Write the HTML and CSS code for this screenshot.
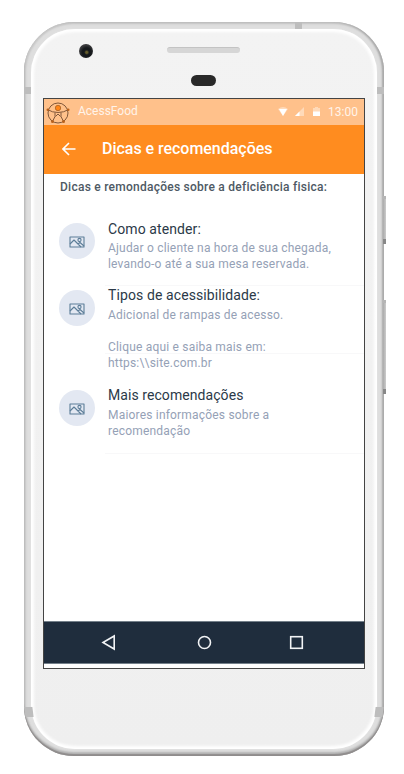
FILE: index.html
```html
<!DOCTYPE html>
<html lang="pt-BR">
<head>
<meta charset="utf-8">
<title>AcessFood</title>
<link rel="stylesheet" href="styles.css">
</head>
<body>
<svg width="0" height="0" class="defs">
  <symbol id="picture" viewBox="0 0 16 12">
    <g fill="none" stroke="#5c7d98" stroke-width="1.1" stroke-linejoin="round">
      <path d="M1 1h14v10H1z"/>
      <path d="M1 8l4-4 4 4 2-1.500 4 3.500M9 8l3 3"/>
      <circle cx="10.500" cy="4" r="1.600"/>
    </g>
  </symbol>
</svg>
<div class="phone">
  <i class="button power"></i><i class="button volume"></i>
  <i class="band top"></i><i class="band left"></i><i class="band right"></i>
  <i class="band low-left"></i><i class="band low-right"></i>
  <div class="face">
    <i class="camera"></i><i class="speaker"></i><i class="sensor"></i>
    <main class="screen">
      <div class="status">
        <svg class="logo" width="24" height="24" viewBox="0 0 24 24">
          <g fill="none" stroke="#80573a" stroke-width="1">
            <circle cx="12" cy="12" r="10"/>
            <path d="M1.500 8.500Q6 11.500 12 11.500T22.500 8.500M9 11.500v4L6.500 20.500M15 11.500v4L17.500 20.500M9.500 15.500L12 13l2.500 2.500"/>
          </g>
          <circle cx="12" cy="7" r="2.700" fill="#ff8419" stroke="#a96325" stroke-width=".8"/>
          <g fill="#b9611b"><circle cx="1.800" cy="8.700" r="1.300"/><circle cx="22.200" cy="8.700" r="1.300"/><circle cx="6.500" cy="20.500" r="1.500"/><circle cx="17.500" cy="20.500" r="1.500"/></g>
        </svg>
        <span class="app">AcessFood</span>
        <svg class="signals" width="46" height="12" viewBox="0 0 46 12">
          <path d="M0 3Q5 -1 10 3L5 10z" fill="#fff" opacity=".4"/>
          <path d="M1 3h8L5 10z" fill="#fff"/>
          <path d="M17 10l9-9v9z" fill="#fff" opacity=".4"/>
          <path d="M17 10l4.500-4.500V10z" fill="#fff"/>
          <path d="M37 1h3v1h2v4h-7V2h2z" fill="#fff" opacity=".4"/>
          <path d="M35 5.500h7V10h-7z" fill="#fff"/>
        </svg>
        <span class="clock">13:00</span>
      </div>
      <header class="bar">
        <svg width="14" height="14" viewBox="0 0 14 14"><path d="M13.500 7H1.500M7 1L1 7l6 6" fill="none" stroke="#fff" stroke-width="1.600"/></svg>
        <h1>Dicas e recomendações</h1>
      </header>
      <section class="content">
        <h2>Dicas e remondações sobre a deficiência fisica:</h2>
        <article class="item first">
          <span class="avatar"><svg width="16" height="12"><use href="#picture"/></svg></span>
          <div class="copy"><h3>Como atender:</h3><p>Ajudar o cliente na hora de sua chegada,<br>levando-o até a sua mesa reservada.</p></div>
        </article>
        <article class="item second">
          <span class="avatar"><svg width="16" height="12"><use href="#picture"/></svg></span>
          <div class="copy"><h3>Tipos de acessibilidade:</h3><p>Adicional de rampas de acesso.<br><br>Clique aqui e saiba mais em:<br>https:\\site.com.br</p></div>
        </article>
        <article class="item third">
          <span class="avatar"><svg width="16" height="12"><use href="#picture"/></svg></span>
          <div class="copy"><h3>Mais recomendações</h3><p>Maiores informações sobre a<br>recomendação</p></div>
        </article>
      </section>
      <nav class="nav">
        <svg width="320" height="41" viewBox="0 0 320 41" fill="none" stroke="#f1f3f5" stroke-width="1.600">
          <path d="M59 20.500L70.200 14v13z"/>
          <circle cx="160.500" cy="20.500" r="6"/>
          <rect x="246.700" y="14.700" width="11.600" height="11.600"/>
        </svg>
      </nav>
    </main>
  </div>
</div>
</body>
</html>
```
FILE: styles.css
```css
* { box-sizing: border-box; }
body {
  margin: 0;
  width: 404px;
  height: 774px;
  overflow: hidden;
  background: #fff;
  font-family: Roboto, "Liberation Sans", sans-serif;
}
h1, h2, h3, p { margin: 0; white-space: nowrap; }
.defs { position: absolute; }
.phone {
  position: relative;
  width: 360px;
  height: 734px;
  margin: 22px 0 0 24px;
  padding: 7px;
  border-radius: 50px;
  background: #dedede;
  box-shadow: inset 0 -2px 1px #8f8c8c, inset 0 -4px 2px #b5b5b5, inset -2px 0 2px #aaa, inset 2px 0 2px #c8c8c8, inset 0 2px 2px #c6c6c6;
}
.face {
  position: relative;
  height: 720px;
  padding: 69px 0 0 12px;
  border-radius: 44px;
  background: linear-gradient(#f3f3f3, #efefef);
  box-shadow: inset 0 0 3px 3px #fff, 0 0 2px #e8e8e8;
}
.band { position: absolute; z-index: 1; background: #bdbdbd; }
.top { left: 271px; top: 0; width: 7px; height: 7px; }
.left { left: 0; top: 65px; width: 7px; height: 7px; }
.right { right: 0; top: 65px; width: 7px; height: 7px; }
.low-left { left: 1px; top: 685px; width: 8px; height: 10px; transform: skewX(7deg); }
.low-right { right: 1px; top: 685px; width: 8px; height: 10px; transform: skewX(-7deg); }
.button {
  position: absolute;
  left: 359px;
  width: 3px;
  border-top: 3px solid #b5b5b5;
  border-bottom: 5px solid #888;
  background: linear-gradient(90deg, #aaa, #ccc);
}
.power { top: 174px; height: 48px; }
.volume { top: 278px; height: 94px; }
.camera {
  position: absolute;
  left: 48px;
  top: 15px;
  width: 14px;
  height: 14px;
  border-radius: 50%;
  background: radial-gradient(circle at 55% 60%, #665d2c 0 8%, #16191c 22% 40%, #3a3a3c 65%);
}
.speaker {
  position: absolute;
  left: 136px;
  top: 18px;
  width: 73px;
  height: 6px;
  border-radius: 3px;
  background: #d6d6d6;
  border-top: 1px solid #c3c3c3;
}
.sensor {
  position: absolute;
  left: 160px;
  top: 46px;
  width: 25px;
  height: 11px;
  border-radius: 6px;
  background: #292929;
}
.screen {
  display: flex;
  flex-direction: column;
  width: 322px;
  height: 571px;
  border: 1px solid #444;
  background: #fff;
}
.status {
  display: flex;
  align-items: center;
  height: 26px;
  padding: 0 6px 0 2px;
  background: #ffc18b;
  color: #fff4ea;
}
.logo { margin: 1px 8px 0 0; }
.app { font-size: 12px; letter-spacing: 0; margin-bottom: 2px; }
.signals { margin: 0 4px 0 auto; }
.clock { font-size: 12px; width: 30px; text-align: right; }
.bar {
  display: flex;
  align-items: center;
  height: 49px;
  padding: 0 0 1px 18px;
  gap: 26px;
  background: #ff8c1f;
  color: #fff;
}
h1 { font-size: 16px; line-height: 20px; font-weight: 500; letter-spacing: -.03px; }
.content { flex: 1; }
h2 {
  padding: 5px 0 0 16px;
  font-size: 12px;
  line-height: 17px;
  font-weight: 500;
  letter-spacing: .25px;
  color: #4e5964;
}
.item { display: flex; padding-left: 15px; }
.avatar {
  display: flex;
  align-items: center;
  justify-content: center;
  width: 36px;
  height: 36px;
  margin-top: 3px;
  border-radius: 50%;
  background: #e3e8f2;
}
.avatar svg { margin-top: 1px; }
.copy { flex: 1; margin-left: 10px; padding-left: 3px; border-bottom: 1px solid #f8f8f9; }
.first { margin-top: 24px; height: 66px; }
.second { height: 101px; }
.second .avatar { margin-top: 4px; }
.second .copy { height: 68px; }
.third { height: 67px; }
h3 { font-size: 14px; line-height: 19px; font-weight: 400; color: #2b3948; letter-spacing: .1px; }
.third h3 { margin-top: -1px; letter-spacing: .07px; }
p { margin-top: 1px; font-size: 12px; line-height: 16px; color: #95a1b6; letter-spacing: .19px; }
.second p { margin-top: 2px; }
.third p { margin-top: 2px; }
.nav {
  height: 43px;
  margin-bottom: 4px;
  border-top: 1px solid #74808a;
  border-bottom: 1px solid #74808a;
  background: #1f2d3d;
}
.nav svg { display: block; }
```
